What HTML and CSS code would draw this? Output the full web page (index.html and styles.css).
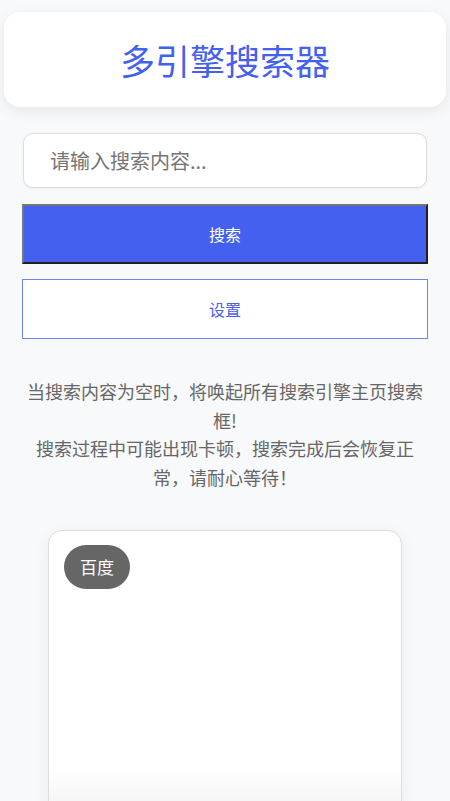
FILE: index.html
```html
<!DOCTYPE html>
<html lang="zh-CN">
    <head>
        <meta charset="UTF-8" />
        <meta name="viewport" content="width=device-width, initial-scale=1.0" />
        <title>多引擎搜索器</title>
        <link rel="stylesheet" href="styles.css">
    </head>
    <body>
        <!-- 头部 -->
        <header class="top">
            <h1 class="tit">多引擎搜索器</h1>
        </header>

        <!-- 搜索区 -->
        <div class="bx-search">
            <input type="text" id="keyword" placeholder="请输入搜索内容..." />
            <button class="sbtn">搜索</button>
            <button class="setbtn">设置</button>
        </div>

        <p class="tip">
            当搜索内容为空时，将唤起所有搜索引擎主页搜索框!<br />
            搜索过程中可能出现卡顿，搜索完成后会恢复正常，请耐心等待！
        </p>

        <!-- 结果框 -->
        <div class="results">
            <div class="card">
                <span class="badge">百度</span>
            </div>
        </div>
    </body>
</html>
```

FILE: styles.css
```css
* {
    box-sizing: border-box;
}
body {
    margin: 0;
    padding: 12px 4px 0;
    background-color: #f8f9fa;
    font-family: "Noto Sans CJK SC", "Noto Sans", sans-serif;
    color: #666;
}
/* 头部 */
.top {
    height: 95px;
    background: #fff;
    border-radius: 16px;
    box-shadow: 0 4px 14px rgba(0, 0, 0, 0.08);
    display: flex;
    align-items: center;
    justify-content: center;
}
.tit {
    margin: 0;
    font-size: 35px;
    font-weight: 400;
    color: #4361ee;
}
/* 搜索区 */
.bx-search {
    margin: 26px 18px 0;
    display: flex;
    flex-direction: column;
}
#keyword {
    height: 55px;
    margin: 0 1px;
    padding: 0 26px;
    border: 1px solid #ddd;
    border-radius: 10px;
    font-family: inherit;
    font-size: 20px;
    background: #fff;
    box-shadow: 0 1px 3px rgba(0, 0, 0, 0.05);
}
#keyword::placeholder {
    color: #757575;
}
.sbtn,
.setbtn {
    height: 60px;
    font-family: inherit;
    font-size: 16px;
}
.sbtn {
    margin-top: 16px;
    background: #4361ee;
    color: #fff;
    border: 2px outset #767676;
}
.setbtn {
    margin-top: 15px;
    background: #fff;
    color: #4361ee;
    border: 1px solid #6d84f3;
}
/* 提示文字 */
.tip {
    margin: 38px 20px 0;
    font-size: 18px;
    line-height: 28.5px;
    text-align: center;
}
/* 结果 */
.results {
    margin-top: 39px;
    display: flex;
    justify-content: center;
}
.card {
    position: relative;
    width: 354px;
    height: 340px;
    padding: 14px 15px;
    background: #fff;
    border: 1px solid #ddd;
    border-radius: 14px;
    box-shadow: 0 4px 16px rgba(0, 0, 0, 0.06);
}
.card::after {
    content: "";
    position: absolute;
    left: 0;
    right: 0;
    top: 236px;
    height: 70px;
    background: linear-gradient(to bottom, rgba(0, 0, 0, 0), rgba(0, 0, 0, 0.07));
}
.badge {
    display: inline-block;
    padding: 9px 16px;
    background: #666;
    color: #fff;
    font-size: 17px;
    line-height: 26px;
    border-radius: 22px;
}
```
